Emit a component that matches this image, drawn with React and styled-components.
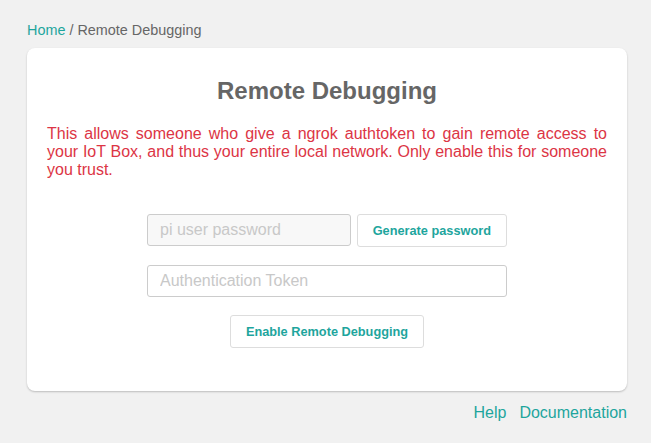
import React from 'react';
import styled, { createGlobalStyle } from 'styled-components';

const GlobalStyle = createGlobalStyle`
  html, body {
    margin: 0;
    padding: 0;
    background: #f1f1f1;
    color: #666666;
    font-family: 'Liberation Sans', Arial, Helvetica, sans-serif;
  }
  * { box-sizing: border-box; }
`

const Page = styled.div`
  width: 600px;
  margin-left: 27px;
  padding-top: 20px;
`

const Breadcrumb = styled.div`
  font-size: 14.4px;
  line-height: 20px;
  margin-bottom: 8px;
`

const Link = styled.a`
  color: #1ea59d;
  text-decoration: none;
  margin-left: ${props => props.spaced ? '13px' : '0'};
`

const Card = styled.div`
  background: #fff;
  border-radius: 8px;
  box-shadow: 0 1px 2px rgba(0, 0, 0, 0.22);
  padding: 20px 20px 43px;
`

const Title = styled.h2`
  margin: 9px 0 20px;
  text-align: center;
  font-size: 24px;
  font-weight: bold;
  color: #666666;
`

const Warning = styled.p`
  margin: 0 0 35px;
  color: #dc3545;
  font-size: 16px;
  text-align: justify;
`

const Form = styled.div`
  width: 360px;
  margin: 0 auto;
  display: flex;
  flex-direction: column;
  align-items: center;
  gap: 18px;
`

const Row = styled.div`
  width: 100%;
  display: flex;
  align-items: flex-start;
  gap: 6px;
`

const Input = styled.input`
  flex: 1;
  min-width: 0;
  height: 32px;
  padding: 0 12px;
  border: 1px solid #cccccc;
  border-radius: 3px;
  background: ${props => props.readOnly ? '#f8f8f8' : '#fff'};
  font-family: inherit;
  font-size: 16px;
  color: #555;
  outline: none;
  &::placeholder { color: #c8c8c8; }
`

const Button = styled.button`
  height: 33px;
  padding: 0 15px;
  border: 1px solid #dddddd;
  border-radius: 3px;
  background: #fff;
  color: #1ea59d;
  font-family: inherit;
  font-weight: bold;
  font-size: 12.75px;
  cursor: pointer;
  flex-shrink: 0;
`

const Footer = styled.div`
  margin-top: 13px;
  text-align: right;
  font-size: 16px;
`

export default function App() {
  return (
    <Page>
      <GlobalStyle />
      <Breadcrumb>
        <Link href="#">Home</Link> / Remote Debugging
      </Breadcrumb>
      <Card>
        <Title>Remote Debugging</Title>
        <Warning>
          This allows someone who give a ngrok authtoken to gain remote access to your IoT Box,
          and thus your entire local network. Only enable this for someone you trust.
        </Warning>
        <Form>
          <Row>
            <Input readOnly placeholder="pi user password" />
            <Button>Generate password</Button>
          </Row>
          <Row>
            <Input placeholder="Authentication Token" />
          </Row>
          <Button>Enable Remote Debugging</Button>
        </Form>
      </Card>
      <Footer>
        <Link href="#">Help</Link>
        <Link href="#" spaced>Documentation</Link>
      </Footer>
    </Page>
  )
}
